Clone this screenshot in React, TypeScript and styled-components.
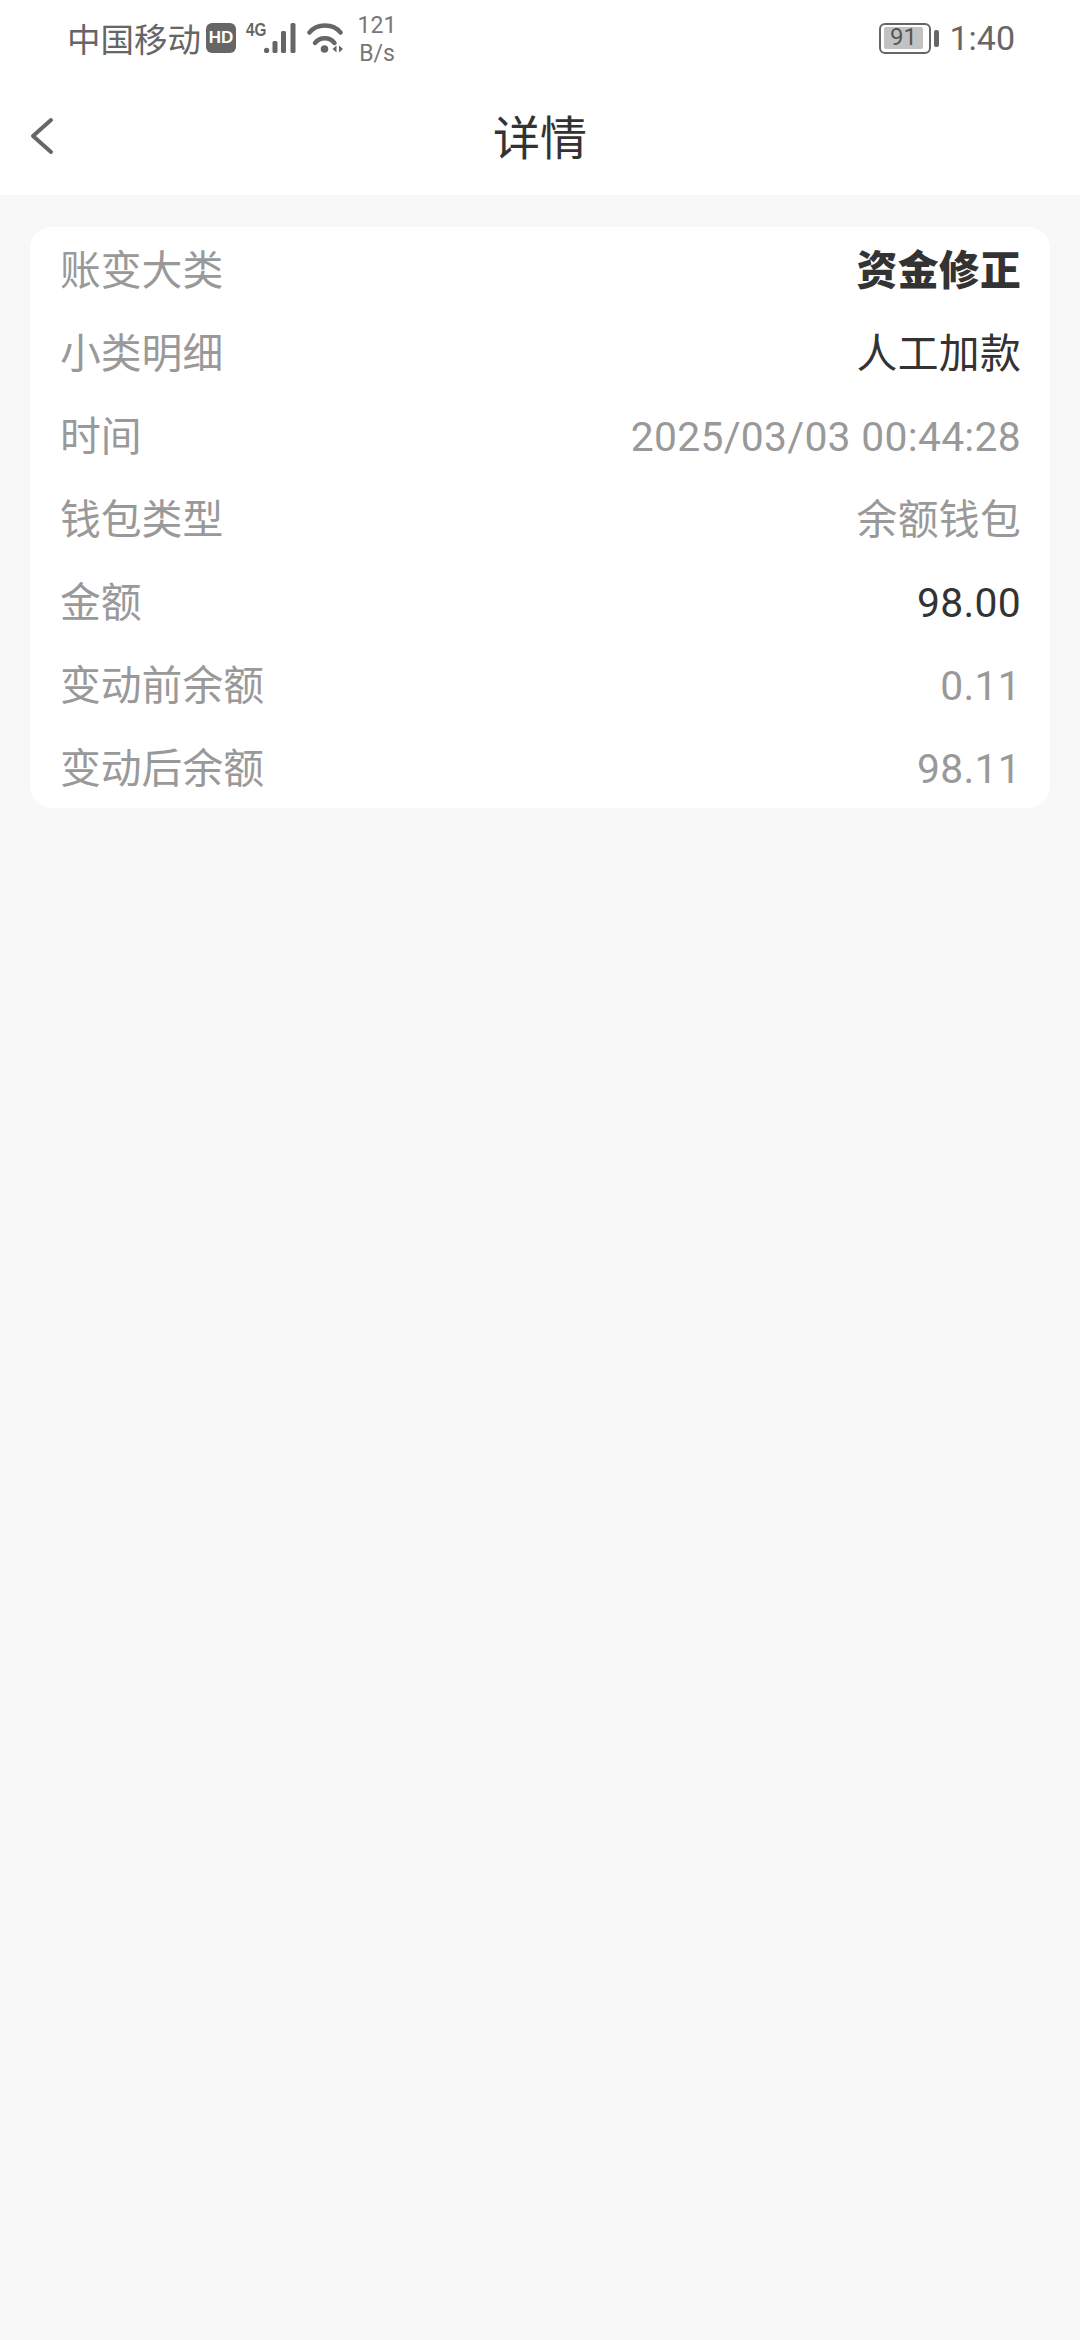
import React from 'react';
import styled, { createGlobalStyle } from 'styled-components';

const GlobalStyle = createGlobalStyle`
  html, body {
    margin: 0;
    padding: 0;
    background: #f8f8f8;
  }
  body {
    font-family: Roboto, "Noto Sans CJK SC", sans-serif;
  }
`;

const Page = styled.div`
  width: 1080px;
  height: 2340px;
  display: flex;
  flex-direction: column;
  background: #f8f8f8;
`;

const Header = styled.header`
  background: #fff;
  height: 195px;
  display: flex;
  flex-direction: column;
`;

const StatusBar = styled.div`
  height: 76px;
  padding: 0 65px 0 67px;
  display: flex;
  align-items: center;
  justify-content: space-between;
  color: #666;
`;

const StatusGroup = styled.div`
  display: flex;
  align-items: center;
`;

const Carrier = styled.span`
  font-family: "Noto Sans CJK SC", sans-serif;
  font-size: 33.5px;
  line-height: 40px;
`;

const HdBadge = styled.span`
  width: 30px;
  height: 30px;
  margin-left: 5px;
  border-radius: 6px;
  background: #666;
  color: #fff;
  font-family: "Liberation Sans", sans-serif;
  font-size: 17px;
  font-weight: 700;
  display: flex;
  align-items: center;
  justify-content: center;
`;

const SignalWrap = styled.div`
  display: flex;
  align-items: flex-end;
  margin-left: 10px;
  height: 30px;
`;

const NetType = styled.span`
  width: 18px;
  align-self: flex-start;
  font-family: "Liberation Sans", sans-serif;
  font-size: 18px;
  font-weight: 700;
  line-height: 14px;
  transform: scaleX(0.85);
  transform-origin: left top;
`;

const WifiIcon = styled.svg`
  margin-left: 11px;
  display: block;
`;

const Speed = styled.div`
  margin: 3px 0 0 12px;
  width: 42px;
  text-align: center;
  font-family: Roboto, sans-serif;
  font-size: 23px;
  line-height: 28px;
  color: #777;
`;

const Battery = styled.div`
  display: flex;
  align-items: center;
  gap: 3px;
`;

const BatteryShell = styled.div`
  width: 52px;
  height: 31px;
  box-sizing: border-box;
  border: 2.5px solid #666;
  border-radius: 6px;
  padding: 2.5px;
  display: flex;
`;

const BatteryLevel = styled.div<{ $level: number }>`
  width: ${(p) => p.$level}%;
  background: #c2c2c2;
  border-radius: 2px;
  font-family: Roboto, sans-serif;
  font-size: 24px;
  line-height: 21px;
  text-align: center;
  color: #555;
`;

const BatteryCap = styled.div`
  width: 4.5px;
  height: 17px;
  border-radius: 2px;
  background: #666;
`;

const Clock = styled.span`
  margin-left: 10.5px;
  font-family: Roboto, sans-serif;
  font-size: 34px;
  line-height: 40px;
  color: #666;
`;

const NavBar = styled.div`
  flex: 1;
  display: flex;
  align-items: center;
  justify-content: center;
  position: relative;
`;

const BackButton = styled.button`
  position: absolute;
  left: 30px;
  top: 41px;
  padding: 0;
  border: 0;
  background: none;
  display: flex;
`;

const Title = styled.h1`
  margin: 0 0 2px;
  font-family: "Noto Sans CJK SC", sans-serif;
  font-size: 47px;
  font-weight: 400;
  color: #333;
`;

const Card = styled.section`
  margin: 32px 30px 0;
  background: #fff;
  border-radius: 22px;
  padding: 0 29px 0 30px;
`;

const Row = styled.div`
  height: 83px;
  box-sizing: border-box;
  padding-top: 4px;
  display: flex;
  align-items: center;
  justify-content: space-between;
  font-family: Roboto, "Noto Sans CJK SC", sans-serif;
  font-size: 40.8px;
  line-height: 48px;
`;

const Label = styled.span`
  color: #999;
`;

const Value = styled.span<{ $tone: 'strong' | 'dark' | 'muted' }>`
  color: ${(p) => (p.$tone === 'muted' ? '#999' : '#333')};
  font-weight: ${(p) => (p.$tone === 'strong' ? 900 : 400)};
  letter-spacing: 0.3px;
`;

const rows: { label: string; value: string; tone: 'strong' | 'dark' | 'muted' }[] = [
  { label: '账变大类', value: '资金修正', tone: 'strong' },
  { label: '小类明细', value: '人工加款', tone: 'dark' },
  { label: '时间', value: '2025/03/03 00:44:28', tone: 'muted' },
  { label: '钱包类型', value: '余额钱包', tone: 'muted' },
  { label: '金额', value: '98.00', tone: 'dark' },
  { label: '变动前余额', value: '0.11', tone: 'muted' },
  { label: '变动后余额', value: '98.11', tone: 'muted' },
];

const App: React.FC = () => {
  return (
    <Page>
      <GlobalStyle />
      <Header>
        <StatusBar>
          <StatusGroup>
            <Carrier>中国移动</Carrier>
            <HdBadge>HD</HdBadge>
            <SignalWrap>
              <NetType>4G</NetType>
              <svg width="32" height="30" viewBox="0 0 32 30" fill="#666">
                <circle cx="2.6" cy="27.4" r="2.6" />
                <rect x="8.5" y="18" width="5" height="12" rx="1.5" />
                <rect x="17" y="8" width="5" height="22" rx="1.5" />
                <rect x="26.5" y="0" width="5" height="30" rx="1.5" />
              </svg>
            </SignalWrap>
            <WifiIcon width="37" height="30" viewBox="0 0 37 30" fill="none" stroke="#666" strokeLinecap="round">
              <path d="M2.5 9.5 C9.5 0 26.5 0 33.5 9.5" strokeWidth="4.5" />
              <path d="M8 20 C12.5 13.5 23 13.5 27.5 20" strokeWidth="4.5" />
              <circle cx="17.5" cy="26" r="3.8" fill="#666" stroke="none" />
              <path d="M29.5 22.5 L25.5 26 L29.5 29.5 Z" fill="#666" stroke="none" />
              <path d="M32 22.5 L36 26 L32 29.5 Z" fill="#666" stroke="none" />
            </WifiIcon>
            <Speed>
              121
              <br />
              B/s
            </Speed>
          </StatusGroup>
          <StatusGroup>
            <Battery>
              <BatteryShell>
                <BatteryLevel $level={91}>91</BatteryLevel>
              </BatteryShell>
              <BatteryCap />
            </Battery>
            <Clock>1:40</Clock>
          </StatusGroup>
        </StatusBar>
        <NavBar>
          <BackButton>
            <svg width="26" height="38" viewBox="0 0 26 38" fill="none" stroke="#666" strokeWidth="4" strokeLinecap="round" strokeLinejoin="round">
              <path d="M21 3 L3 19 L21 35" />
            </svg>
          </BackButton>
          <Title>详情</Title>
        </NavBar>
      </Header>
      <Card>
        {rows.map((row) => (
          <Row key={row.label}>
            <Label>{row.label}</Label>
            <Value $tone={row.tone}>{row.value}</Value>
          </Row>
        ))}
      </Card>
    </Page>
  );
};

export default App;
